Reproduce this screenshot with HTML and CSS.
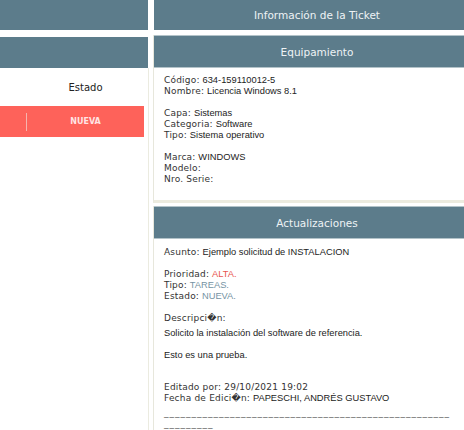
FILE: index.html
```html
<!DOCTYPE html>
<html lang="es">
<head>
    <meta charset="UTF-8">
    <meta name="viewport" content="width=device-width, initial-scale=1.0">
    <title>Ticket</title>
    <link rel="stylesheet" href="styles.css">
</head>
<body>

<div class="page">
    <!-- ticket list -->
    <div class="col-left">
        <div class="bar"></div>
        <div class="bar bar-sub"></div>
        <div class="list">
            <div class="list-head">
                <span class="cell-cut"></span>
                <span class="cell">Estado</span>
            </div>
            <div class="list-row status-new">
                <span class="cell-cut"></span>
                <span class="cell-sep"></span>
                <span class="cell">NUEVA</span>
            </div>
        </div>
    </div>

    <!-- ticket detail -->
    <div class="col-right">
        <div class="bar">Información de la Ticket</div>

        <section class="panel panel-first">
            <h3 class="panel-title">Equipamiento</h3>
            <div class="panel-body">
                <p class="group">
                    <span class="lbl">Código:</span> <span class="val">634-159110012-5</span><br>
                    <span class="lbl">Nombre:</span> <span class="val">Licencia Windows 8.1</span>
                </p>
                <p class="group">
                    <span class="lbl">Capa:</span> <span class="val">Sistemas</span><br>
                    <span class="lbl">Categoria:</span> <span class="val">Software</span><br>
                    <span class="lbl">Tipo:</span> <span class="val">Sistema operativo</span>
                </p>
                <p class="group">
                    <span class="lbl">Marca:</span> <span class="val">WINDOWS</span><br>
                    <span class="lbl">Modelo:</span><br>
                    <span class="lbl">Nro. Serie:</span>
                </p>
            </div>
        </section>

        <section class="panel">
            <h3 class="panel-title">Actualizaciones</h3>
            <div class="panel-body panel-body-updates">
                <p class="group">
                    <span class="lbl">Asunto:</span> <span class="val">Ejemplo solicitud de INSTALACION</span>
                </p>
                <p class="group">
                    <span class="lbl">Prioridad:</span> <span class="val prio-high">ALTA.</span><br>
                    <span class="lbl">Tipo:</span> <span class="val tag">TAREAS.</span><br>
                    <span class="lbl">Estado:</span> <span class="val tag">NUEVA.</span>
                </p>
                <div class="desc">
                    <span class="lbl">Descripci&#xFFFD;n:</span>
                    <p class="val">Solicito la instalación del software de referencia.</p>
                    <p class="val">Esto es una prueba.</p>
                </div>
                <p class="group edited">
                    <span class="lbl">Editado por: 29/10/2021 19:02</span><br>
                    <span class="lbl">Fecha de Edici&#xFFFD;n:</span> <span class="val">PAPESCHI, ANDRÉS GUSTAVO</span>
                </p>
                <p class="rule">____________________________________________________<br>_________</p>
            </div>
        </section>
    </div>
</div>

</body>
</html>
```

FILE: styles.css
```css
html, body {
    margin: 0;
    overflow: hidden;
}

body {
    font-family: "DejaVu Sans", Verdana, sans-serif;
    background: #fff;
    color: #333;
}

.page {
    display: flex;
    gap: 4px;
    width: 481px;
}

/* Header bars */
.bar {
    display: flex;
    align-items: center;
    justify-content: center;
    height: 30px;
    background: #5c7c8b;
    color: #eef3f5;
    font-size: 10.5px;
}

/* Left column: ticket list */
.col-left {
    flex: none;
    width: 149px;
    height: 100vh;
    display: flex;
    flex-direction: column;
}

.col-left .bar {
    width: 148px;
}

.col-left .bar-sub {
    margin-top: 7px;
    height: 31px;
}

.list {
    flex: 1;
    padding-right: 4px;
    border-right: 1px solid #ebebe0;
}

.list-head {
    display: flex;
    align-items: center;
    height: 38px;
    font-size: 10px;
    color: #222;
}

.cell-cut {
    flex: none;
    width: 27px;
}

.cell {
    flex: 1;
    text-align: center;
}

.list-row {
    display: flex;
    align-items: center;
    height: 31px;
}

.status-new {
    background: #fe625a;
}

.status-new .cell-cut {
    width: 26px;
}

.cell-sep {
    width: 1px;
    height: 18px;
    background: #f6b4ae;
}

.status-new .cell {
    color: #ffe4e4;
    font-weight: bold;
    font-size: 8px;
}

/* Right column: ticket detail */
.col-right {
    flex: none;
    width: 328px;
}

.col-right > .bar {
    margin: 0 1px;
}

.panel {
    margin-top: 3px;
    border: 1px solid #e7e7dc;
    border-top: 0;
    background: #fff;
}

.panel-first {
    margin-top: 5px;
    border-bottom: 3px solid #ecebdf;
}

.panel-title {
    display: flex;
    align-items: center;
    justify-content: center;
    height: 31px;
    margin: 0;
    background: #5c7c8b;
    border-top: 1px solid #b3c3c9;
    border-bottom: 1px solid #b3c3c9;
    color: #eef3f5;
    font-size: 10.5px;
    font-weight: normal;
}

.panel-body {
    padding: 7px 10px 15px;
    font-size: 9px;
    line-height: 11px;
}

.panel-body-updates {
    padding-top: 8px;
}

.group {
    margin: 0 0 11px;
}

.panel-first .group:last-child {
    margin-bottom: 0;
}

.lbl {
    color: #333;
    letter-spacing: 0.2px;
}

.val {
    font-family: "Liberation Sans", Arial, sans-serif;
    font-size: 9.3px;
    color: #222;
}

.prio-high {
    color: #e8554f;
}

.tag {
    color: #7593a3;
}

.desc p {
    margin: 11px 0 0;
}

.desc p:first-of-type {
    margin-top: 4px;
}

.edited {
    margin: 21px 0 0;
}

.rule {
    margin: 4px 0 0;
    color: #555;
    letter-spacing: 1px;
}
```
